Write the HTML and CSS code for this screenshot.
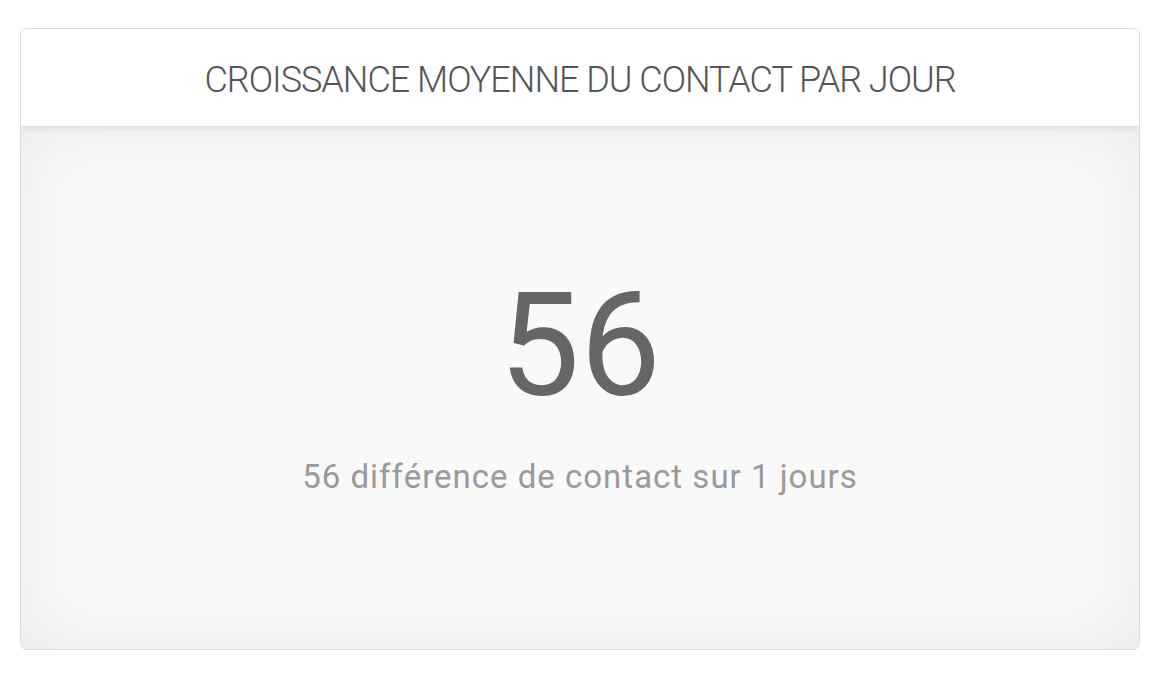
FILE: index.html
```html
<!DOCTYPE html>
<html lang="fr">
<head>
<meta charset="utf-8">
<link rel="stylesheet" href="styles.css">
</head>
<body>
<div class="page">
  <section class="card">
    <header class="card-header">
      <h2 class="card-title">CROISSANCE MOYENNE DU CONTACT PAR JOUR</h2>
    </header>
    <div class="card-body">
      <div class="metric">56</div>
      <div class="caption">56 différence de contact sur 1 jours</div>
    </div>
  </section>
</div>
</body>
</html>
```

FILE: styles.css
```css
* { box-sizing: border-box; }
html, body { margin: 0; padding: 0; background: #fff; }
body { font-family: Roboto, "Noto Sans", "Liberation Sans", sans-serif; }
.page {
  width: 1164px;
  height: 674px;
  padding: 28px 24px 24px 20px;
}
.card {
  width: 1120px;
  height: 622px;
  border: 1px solid #dcdcdc;
  border-radius: 7px;
  overflow: hidden;
  display: flex;
  flex-direction: column;
  background: #f9f9f9;
}
.card-header {
  height: 97px;
  flex: none;
  background: #fff;
  display: flex;
  align-items: center;
  justify-content: center;
  position: relative;
  z-index: 1;
  box-shadow: 0 2px 6px rgba(0,0,0,0.08);
}
.card-title {
  margin: 0;
  font-weight: 300;
  font-size: 36px;
  color: #555;
  letter-spacing: -1px;
  padding-top: 4px;
}
.card-body {
  flex: 1;
  display: flex;
  flex-direction: column;
  align-items: center;
  background: #f9f9f9;
  box-shadow: inset 0 0 70px rgba(0,0,0,0.07);
  padding-top: 148px;
}
.metric {
  font-size: 144px;
  line-height: 1;
  font-weight: 400;
  color: #666;
}
.caption {
  margin-top: 39px;
  font-size: 33px;
  letter-spacing: 1px;
  color: #9a9a9a;
}
```
